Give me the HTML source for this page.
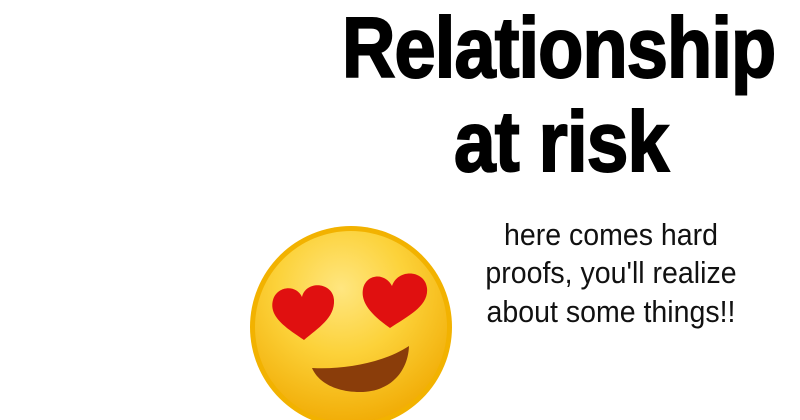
<!DOCTYPE html>
<html><head><style>
body{margin:0;width:800px;height:420px;background:#fff;overflow:hidden;position:relative;font-family:"Liberation Sans",sans-serif}
.t{position:absolute;white-space:nowrap;color:#000;line-height:1}
.h{font-weight:bold;font-size:85px;letter-spacing:-1px;transform-origin:0 0;-webkit-text-stroke:2px #000}
.s{font-size:31px;left:611px;transform:translateX(-50%) scaleX(0.92);color:#111}
</style></head><body>
<div class="t h" style="left:342px;top:6px;transform:scaleX(0.87)">Relationship</div>
<div class="t h" style="left:454px;top:100px;transform:scaleX(0.88)">at risk</div>
<div class="t s" style="top:219px">here comes hard</div>
<div class="t s" style="top:257px">proofs, you'll realize</div>
<div class="t s" style="top:296px">about some things!!</div>
<svg width="800" height="420" style="position:absolute;left:0;top:0">
<defs>
<radialGradient id="g" cx="0.45" cy="0.3" r="0.75">
<stop offset="0" stop-color="#ffe680"/><stop offset="0.45" stop-color="#fcd23a"/><stop offset="1" stop-color="#f0a800"/>
</radialGradient>
</defs>
<circle cx="351" cy="327" r="101" fill="#f2b200"/>
<circle cx="351" cy="327" r="96" fill="url(#g)"/>
<path d="M304 340 C290 330,268 318,273 300 C277 286,296 284,302 297 C306 280,333 282,334 300 C335 318,318 328,304 340Z" fill="#e01010"/>
<path d="M390 328 C376 318,360 305,363 289 C366 274,385 272,392 286 C398 268,425 270,427 288 C429 306,408 316,390 328Z" fill="#e01010"/>
<path d="M312 368 C345 370,385 362,409 346 C408 372,390 392,360 392 C335 392,318 382,312 368Z" fill="#8a3d0a"/>
</svg>
</body></html>
